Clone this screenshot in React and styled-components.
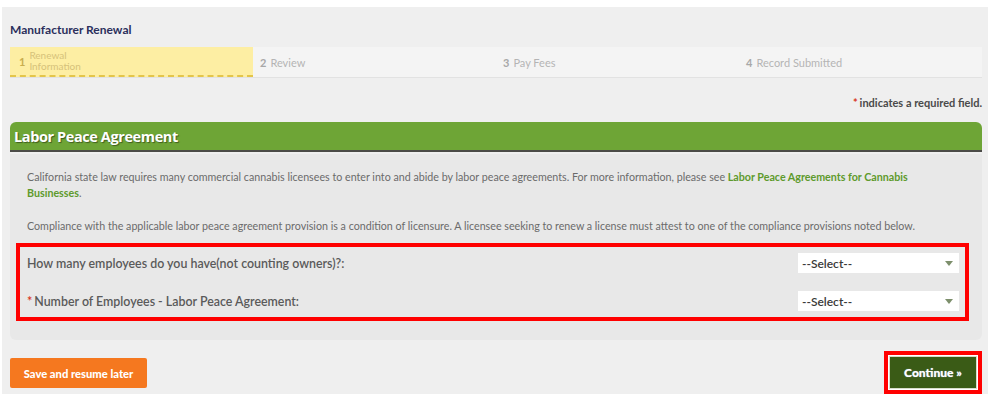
import React from "react";
import styled, { createGlobalStyle } from "styled-components";

const GlobalStyle = createGlobalStyle`
    body {
        margin: 0;
        background: #ffffff;
        font-family: Lato, "Open Sans", Arial, sans-serif;
    }
`;

const Page = styled.div`
    margin: 7px 6px 0 2px;
    height: 387px;
    box-sizing: border-box;
    background: #efefef;
    padding: 16px 6px 0 8px;
`;

const Title = styled.h1`
    margin: 0;
    font-size: 12px;
    line-height: 14px;
    font-weight: 700;
    color: #2b2f5c;
`;

const Steps = styled.div`
    margin-top: 10px;
    display: grid;
    grid-template-columns: repeat(4, 1fr);
    background: #f4f4f4;
    border-bottom: 1px solid #e2e2e2;
    height: 30px;
`;

const Step = styled.div`
    display: flex;
    align-items: center;
    gap: 4px;
    padding-left: ${(p) => (p.$active ? "9px" : "7px")};
    background: ${(p) => (p.$active ? "#fdeea3" : "transparent")};
    border-bottom: ${(p) => (p.$active ? "2px dashed #e3c54a" : "none")};
    font-size: 11px;
    color: ${(p) => (p.$active ? "#d6c27a" : "#b4b4b4")};
`;

const StepNum = styled.span`
    font-weight: 700;
    color: ${(p) => (p.$active ? "#c9ad4e" : "#a8a8a8")};
    font-size: 11px;
`;

const StepLabel = styled.span`
    line-height: 11px;
    font-size: ${(p) => (p.$small ? "10px" : "11px")};
`;

const Required = styled.div`
    margin-top: 19px;
    text-align: right;
    font-size: 11px;
    font-weight: 700;
    color: #4a4a4a;
    line-height: 12px;
`;

const Star = styled.span`
    color: #d9361b;
    margin-right: 2px;
`;

const Section = styled.section`
    margin-top: 13px;
`;

const SectionHeader = styled.h2`
    margin: 0;
    height: 28px;
    display: flex;
    align-items: center;
    padding-left: 4px;
    background: #6ea536;
    border-radius: 6px 6px 0 0;
    border-bottom: 2px solid #4b4b47;
    font-family: "Open Sans", Lato, sans-serif;
    font-size: 14.5px;
    font-weight: 700;
    letter-spacing: -0.4px;
    color: #ffffff;
    text-shadow: 1px 1px 1px #3f5e1e;
`;

const SectionBody = styled.div`
    margin-top: 2px;
    background: #e8e8e8;
    border-radius: 0 0 6px 6px;
    padding: 15px 13px 19px 6px;
`;

const Text = styled.p`
    margin: 0 40px ${(p) => p.$gap || 0}px 11px;
    font-size: 10.7px;
    line-height: 16px;
    color: #6b6b6b;
`;

const Link = styled.a`
    color: #5e9a2c;
    font-weight: 700;
    text-decoration: none;
`;

const QuestionBox = styled.div`
    margin-top: 9px;
    border: 4px solid #ff0000;
    padding: 6px 6px 6px 7px;
    display: flex;
    flex-direction: column;
    gap: 18px;
`;

const Row = styled.div`
    display: flex;
    align-items: center;
    justify-content: space-between;
    height: 20px;
`;

const Label = styled.label`
    font-size: 12.4px;
    font-weight: 600;
    color: #5a5a5a;
`;

const Select = styled.div`
    width: 161px;
    height: 20px;
    box-sizing: border-box;
    background: #ffffff;
    display: flex;
    align-items: center;
    justify-content: space-between;
    padding: 0 6px 0 4px;
    font-size: 12px;
    font-weight: 600;
    color: #3a3a3a;
`;

const Caret = styled.span`
    width: 0;
    height: 0;
    border-left: 4px solid transparent;
    border-right: 4px solid transparent;
    border-top: 5px solid #7d8f6c;
`;

const Actions = styled.div`
    margin-top: 11px;
    display: flex;
    justify-content: space-between;
    align-items: flex-start;
`;

const SaveButton = styled.button`
    margin-top: 7px;
    width: 137px;
    height: 30px;
    border: none;
    border-radius: 2px;
    background: #f5781f;
    color: #ffffff;
    font-family: Lato, sans-serif;
    font-size: 11.2px;
    font-weight: 900;
`;

const Highlight = styled.div`
    border: 4px solid #ff0000;
    padding: 1px;
    background: #ffffff;
`;

const ContinueButton = styled.button`
    display: block;
    width: 88px;
    height: 33px;
    border: 1px solid #d7dccb;
    background: #3a5b16;
    color: #ffffff;
    font-family: Lato, sans-serif;
    font-size: 12px;
    font-weight: 900;
    text-shadow: 0 0 1px #9fb6d8;
`;

export default function App() {
    return (
        <>
            <GlobalStyle />
            <Page>
                <Title>Manufacturer Renewal</Title>
                <Steps>
                    <Step $active>
                        <StepNum $active>1</StepNum>
                        <StepLabel $small>
                            Renewal
                            <br />
                            Information
                        </StepLabel>
                    </Step>
                    <Step>
                        <StepNum>2</StepNum>
                        <StepLabel>Review</StepLabel>
                    </Step>
                    <Step>
                        <StepNum>3</StepNum>
                        <StepLabel>Pay Fees</StepLabel>
                    </Step>
                    <Step>
                        <StepNum>4</StepNum>
                        <StepLabel>Record Submitted</StepLabel>
                    </Step>
                </Steps>
                <Required>
                    <Star>*</Star>indicates a required field.
                </Required>
                <Section>
                    <SectionHeader>Labor Peace Agreement</SectionHeader>
                    <SectionBody>
                        <Text $gap={17}>
                            California state law requires many commercial cannabis licensees to enter into and
                            abide by labor peace agreements. For more information, please see{" "}
                            <Link>Labor Peace Agreements for Cannabis Businesses</Link>.
                        </Text>
                        <Text>
                            Compliance with the applicable labor peace agreement provision is a condition of
                            licensure. A licensee seeking to renew a license must attest to one of the compliance
                            provisions noted below.
                        </Text>
                        <QuestionBox>
                            <Row>
                                <Label>How many employees do you have(not counting owners)?:</Label>
                                <Select>
                                    --Select--
                                    <Caret />
                                </Select>
                            </Row>
                            <Row>
                                <Label>
                                    <Star>*</Star>Number of Employees - Labor Peace Agreement:
                                </Label>
                                <Select>
                                    --Select--
                                    <Caret />
                                </Select>
                            </Row>
                        </QuestionBox>
                    </SectionBody>
                </Section>
                <Actions>
                    <SaveButton>Save and resume later</SaveButton>
                    <Highlight>
                        <ContinueButton>Continue »</ContinueButton>
                    </Highlight>
                </Actions>
            </Page>
        </>
    );
}
